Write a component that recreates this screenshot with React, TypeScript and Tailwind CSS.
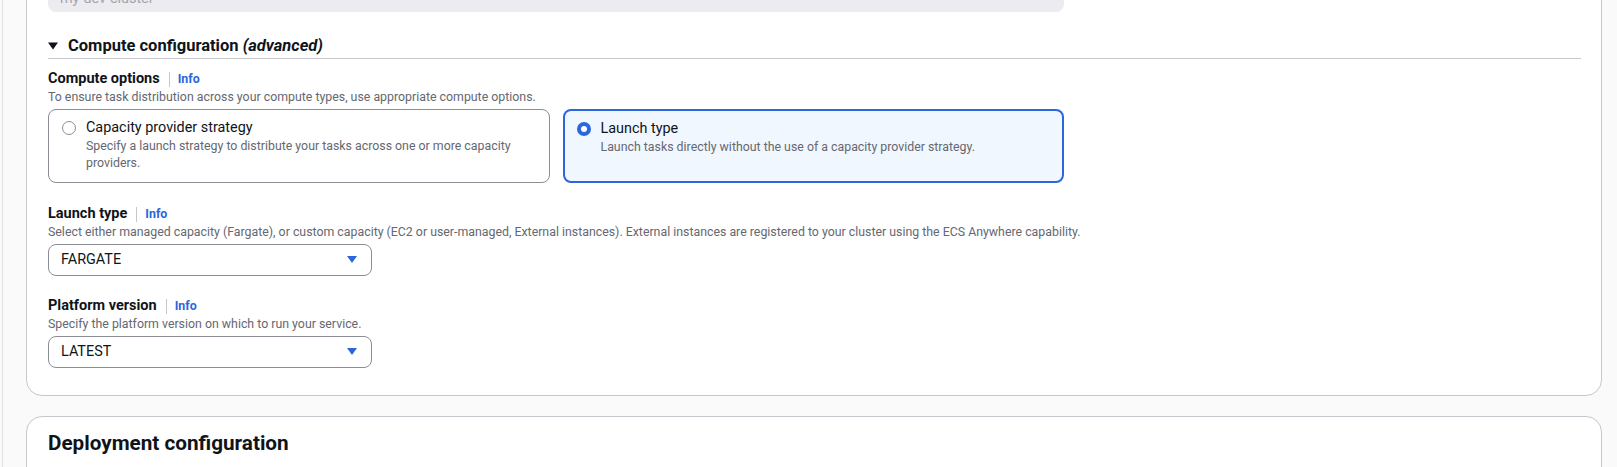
import { clsx } from 'clsx';

const font = { fontFamily: 'Roboto, "Open Sans", Arial, sans-serif' };

function InfoLabel({ label }: { label: string }) {
    return (
        <div className="flex items-center h-5">
            <span className="text-[14.5px] font-bold text-[#0f141a] leading-5">{label}</span>
            <span className="ml-[9px] mr-2 h-[15px] w-px bg-[#c6c6cd]" />
            <span className="text-[12.4px] font-bold text-[#2b66dc] leading-5">Info</span>
        </div>
    );
}

function Caret() {
    return (
        <svg width="10" height="8" viewBox="0 0 10 8" className="text-[#2b66dc]">
            <path d="M0 0 H10 L5 7 Z" fill="currentColor" />
        </svg>
    );
}

function Select({ value }: { value: string }) {
    return (
        <div className="mt-1 flex h-8 w-[324px] items-center justify-between rounded-lg border border-[#8c8c94] bg-white pl-3 pr-[14px]">
            <span className="text-[14.4px] text-[#0f141a]">{value}</span>
            <Caret />
        </div>
    );
}

function Tile({ title, desc, selected }: { title: string; desc: string; selected?: boolean }) {
    return (
        <div
            className={clsx(
                'flex gap-[10px] rounded-lg pt-2 pb-[11px]',
                selected ? 'border-2 border-[#2b66dc] bg-[#f1f7ff] pl-3 pr-3' : 'border border-[#8c8c94] bg-white pl-[13px] pr-[13px]'
            )}
        >
            <div className="flex h-5 items-center">
                {selected ? (
                    <span className="flex h-[14px] w-[14px] items-center justify-center rounded-full bg-[#2b66dc]">
                        <span className="h-[6px] w-[6px] rounded-full bg-white" />
                    </span>
                ) : (
                    <span className="h-[14px] w-[14px] rounded-full border border-[#8c8c94] bg-white" />
                )}
            </div>
            <div className="min-w-0">
                <div className="text-[14.4px] leading-5 text-[#0f141a]">{title}</div>
                <div className="text-[12.35px] leading-[16.5px] text-[#656871]">{desc}</div>
            </div>
        </div>
    );
}

export default function App() {
    return (
        <div className="h-[467px] w-full overflow-hidden bg-[#fafafa] flex" style={font}>
            <div className="w-[2px] shrink-0" />
            <div className="flex-1 border-l border-[#e0e0e0] pl-[23px] pr-[15px]">
                {/* Service details panel (continues above the view) */}
                <div className="-mt-[60px] rounded-b-2xl border border-[#c6c6cd] bg-white pl-[21px] pr-5 pt-[39px] pb-[27px]">
                    <div className="flex h-8 w-[1016px] items-end rounded-lg bg-[#ebebf0] px-3 pb-[3px] text-[14.4px] leading-5 text-[#a4a4ad]">
                        my-dev-cluster
                    </div>

                    {/* Expandable section */}
                    <div className="mt-[22px] flex h-6 items-center gap-[10px] border-b border-[#c6c6cd] box-content">
                        <svg width="10" height="8" viewBox="0 0 10 8">
                            <path d="M0 0.5 H10 L5 7.5 Z" fill="#0f141a" />
                        </svg>
                        <span className="text-[16.5px] font-bold text-[#0f141a]">
                            Compute configuration <i>(advanced)</i>
                        </span>
                    </div>
                    <div className="h-[2px]" />

                    <div className="mt-2 w-[1016px]">
                        <InfoLabel label="Compute options" />
                        <div className="text-[12.35px] leading-4 text-[#656871]">
                            To ensure task distribution across your compute types, use appropriate compute options.
                        </div>
                        <div className="mt-1 grid grid-cols-2 gap-[13px]">
                            <Tile
                                title="Capacity provider strategy"
                                desc="Specify a launch strategy to distribute your tasks across one or more capacity providers."
                            />
                            <Tile
                                selected
                                title="Launch type"
                                desc="Launch tasks directly without the use of a capacity provider strategy."
                            />
                        </div>
                    </div>

                    <div className="mt-[21px]">
                        <InfoLabel label="Launch type" />
                        <div className="text-[12.35px] leading-4 text-[#656871]">
                            Select either managed capacity (Fargate), or custom capacity (EC2 or user-managed, External instances). External instances are registered to your cluster using the ECS Anywhere capability.
                        </div>
                        <Select value="FARGATE" />
                    </div>

                    <div className="mt-[20px]">
                        <InfoLabel label="Platform version" />
                        <div className="text-[12.35px] leading-4 text-[#656871]">
                            Specify the platform version on which to run your service.
                        </div>
                        <Select value="LATEST" />
                    </div>
                </div>

                {/* Deployment configuration panel */}
                <div className="mt-[20px] h-[200px] rounded-t-2xl border border-[#c6c6cd] bg-white pl-[21px] pr-5 pt-3">
                    <h2 className="text-[20.7px] font-bold leading-7 text-[#0f141a]">Deployment configuration</h2>
                </div>
            </div>
        </div>
    );
}
